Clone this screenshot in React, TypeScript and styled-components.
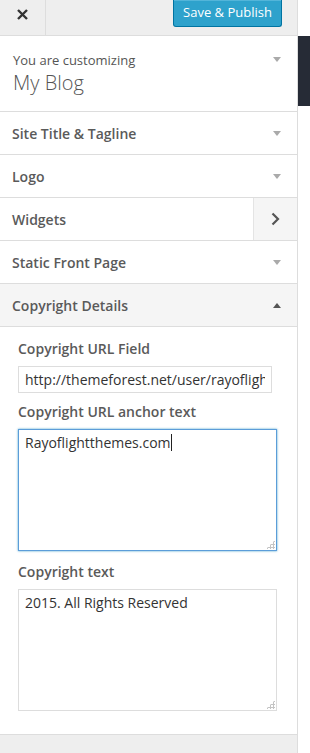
import styled, { createGlobalStyle } from "styled-components";

const GlobalStyle = createGlobalStyle`
    html, body {
        margin: 0;
        padding: 0;
        background: #fff;
        font-family: "Open Sans", "Liberation Sans", sans-serif;
    }
    * {
        box-sizing: border-box;
    }
`;

const Page = styled.div`
    display: flex;
    width: 310px;
    height: 753px;
    overflow: hidden;
`;

const Sidebar = styled.div`
    width: 298px;
    flex: none;
    display: flex;
    flex-direction: column;
    border-right: 1px solid #ddd;
    background: #fff;
`;

const Preview = styled.div`
    flex: 1;
    padding-top: 36px;
`;

const AdminBar = styled.div`
    height: 70px;
    background: #262b36;
`;

const Header = styled.div`
    height: 36px;
    display: flex;
    align-items: flex-start;
    justify-content: space-between;
    background: #eee;
    border-bottom: 1px solid #ddd;
    padding-right: 15px;
`;

const CloseButton = styled.button`
    width: 46px;
    height: 35px;
    border: none;
    border-right: 1px solid #ddd;
    background: transparent;
    padding: 0 0 7px 0;
    display: flex;
    align-items: center;
    justify-content: center;
`;

const PublishButton = styled.button`
    width: 109px;
    height: 27px;
    padding: 0 0 2px;
    border: 1px solid #0074a2;
    border-top: none;
    border-radius: 0 0 3px 3px;
    background: #2ea2cc;
    box-shadow: inset 0 1px 0 rgba(120, 200, 230, 0.5);
    color: #fff;
    font-family: inherit;
    font-size: 13px;
`;

const Info = styled.div`
    height: 76px;
    border-bottom: 1px solid #ddd;
    padding: 14px 16px 0 13px;
    display: flex;
    justify-content: space-between;
    color: #555;
`;

const InfoSmall = styled.div`
    font-size: 13px;
    line-height: 20px;
`;

const InfoTitle = styled.div`
    font-size: 20px;
    font-weight: 300;
    line-height: 26px;
`;

const Section = styled.div<{ $open?: boolean }>`
    height: 43px;
    display: flex;
    align-items: center;
    justify-content: space-between;
    border-bottom: 1px solid #ddd;
    background: ${(p) => (p.$open ? "#f5f5f5" : "#fff")};
    padding-left: 12px;
    font-size: 14px;
    font-weight: 600;
    color: #5a5a5a;
`;

const Arrow = styled.span<{ $up?: boolean }>`
    width: 0;
    height: 0;
    margin-right: 16px;
    border-left: 4px solid transparent;
    border-right: 4px solid transparent;
    ${(p) =>
        p.$up
            ? "border-bottom: 5px solid #555;"
            : "border-top: 5px solid #aaa;"}
`;

const SideTab = styled.span`
    width: 44px;
    height: 42px;
    display: flex;
    align-items: center;
    justify-content: center;
    background: #f5f5f5;
    border-left: 1px solid #e4e4e4;
`;

const Content = styled.div`
    flex: 1;
    padding: 12px 20px 0 18px;
    border-bottom: 1px solid #ddd;
`;

const Label = styled.div`
    font-size: 14px;
    font-weight: 600;
    line-height: 20px;
    color: #5a5a5a;
    margin-bottom: 7px;
`;

const TextInput = styled.input`
    display: block;
    width: 254px;
    height: 27px;
    margin-bottom: 9px;
    padding: 0 6px;
    border: 1px solid #ddd;
    font-family: inherit;
    font-size: 14px;
    color: #333;
    outline: none;
`;

const AreaWrap = styled.div`
    position: relative;
    width: 259px;
    margin-bottom: 11px;

    &::after {
        content: "";
        position: absolute;
        right: 2px;
        bottom: 2px;
        width: 9px;
        height: 9px;
        background:
            radial-gradient(circle, #c4c4c4 1.1px, transparent 1.3px) 0 0 / 3px 3px;
        clip-path: polygon(100% 0, 100% 100%, 0 100%);
    }
`;

const TextArea = styled.textarea<{ $focused?: boolean }>`
    display: block;
    width: 100%;
    height: 122px;
    resize: none;
    padding: 3px 6px;
    font-family: inherit;
    font-size: 14px;
    line-height: 20px;
    color: #333;
    outline: none;
    border: 1px solid ${(p) => (p.$focused ? "#5b9dd9" : "#ddd")};
    box-shadow: ${(p) => (p.$focused ? "0 0 2px rgba(30, 140, 190, 0.8)" : "none")};
`;

const Caret = styled.span`
    position: absolute;
    left: 153px;
    top: 5px;
    width: 1px;
    height: 17px;
    background: #222;
`;

const Footer = styled.div`
    height: 18px;
    background: #eee;
`;

const sections = ["Site Title & Tagline", "Logo", "Widgets", "Static Front Page"];

const App = () => {
    return (
        <Page>
            <GlobalStyle />
            <Sidebar>
                <Header>
                    <CloseButton>
                        <svg width="11" height="11" viewBox="0 0 11 11">
                            <path d="M1 1 L10 10 M10 1 L1 10" stroke="#333" strokeWidth="2.4" />
                        </svg>
                    </CloseButton>
                    <PublishButton>Save &amp; Publish</PublishButton>
                </Header>
                <Info>
                    <div>
                        <InfoSmall>You are customizing</InfoSmall>
                        <InfoTitle>My Blog</InfoTitle>
                    </div>
                    <Arrow style={{ marginTop: 7, marginRight: 0 }} />
                </Info>
                {sections.map((title) => (
                    <Section key={title}>
                        {title}
                        {title === "Widgets" ? (
                            <SideTab>
                                <svg width="9" height="14" viewBox="0 0 9 14">
                                    <path d="M1.5 1.5 L7 7 L1.5 12.5" fill="none" stroke="#555" strokeWidth="2.2" />
                                </svg>
                            </SideTab>
                        ) : (
                            <Arrow />
                        )}
                    </Section>
                ))}
                <Section $open>
                    Copyright Details
                    <Arrow $up />
                </Section>
                <Content>
                    <Label>Copyright URL Field</Label>
                    <TextInput defaultValue="http://themeforest.net/user/rayoflightthemes" />
                    <Label>Copyright URL anchor text</Label>
                    <AreaWrap>
                        <TextArea $focused defaultValue="Rayoflightthemes.com" />
                        <Caret />
                    </AreaWrap>
                    <Label>Copyright text</Label>
                    <AreaWrap>
                        <TextArea defaultValue="2015. All Rights Reserved" />
                    </AreaWrap>
                </Content>
                <Footer />
            </Sidebar>
            <Preview>
                <AdminBar />
            </Preview>
        </Page>
    );
};

export default App;
